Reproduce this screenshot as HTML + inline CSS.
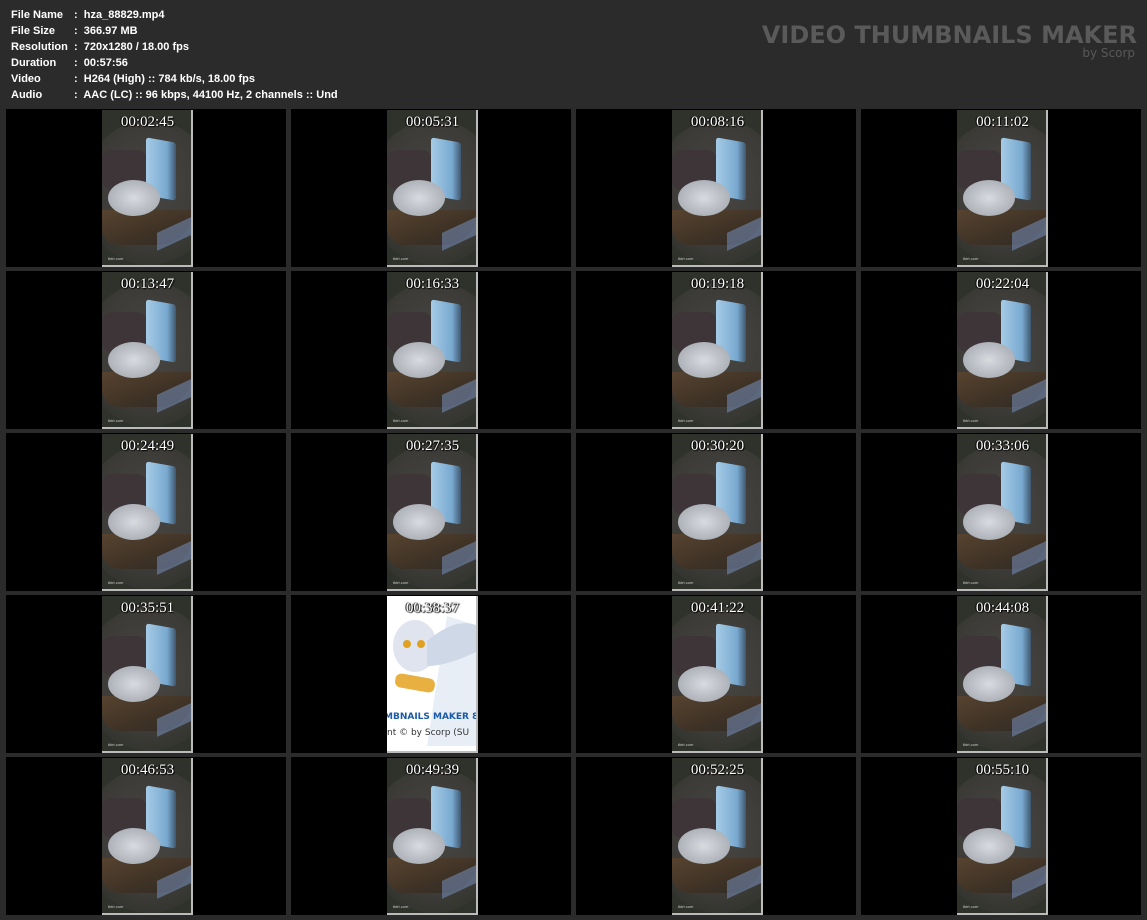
<!DOCTYPE html>
<html><head><meta charset="utf-8"><style>
*{margin:0;padding:0;box-sizing:border-box}
body{width:1147px;height:920px;background:#2b2b2b;position:relative;overflow:hidden;font-family:"Liberation Sans",Arial,sans-serif}
.info{position:absolute;left:11px;top:7px;color:#fff;font-size:11px;font-weight:bold;line-height:16px}
.info div{white-space:pre}
.info span{display:inline-block;width:63px}
.logo{position:absolute;right:10px;top:22px;color:#5a5a5a;font-family:"DejaVu Sans",sans-serif;font-weight:bold;font-size:24px;letter-spacing:0px;text-align:right;line-height:26px}
.logo small{display:block;font-size:12px;font-weight:normal;line-height:11px;margin-right:2px;color:#585858}
.cell{position:absolute;width:280px;height:158px;background:#000}
.th{position:absolute;left:96px;top:1px;width:91px;height:157px;background:#2f312b;overflow:hidden;border-right:2px solid #bbb;border-bottom:2px solid #bbb}
.th .v{position:absolute;left:-20px;top:10px;width:135px;height:145px;border-radius:50%;background:radial-gradient(ellipse at 50% 45%,#4a4743 0%,#3c3b37 55%,#30322c 80%)}
.th .wall{position:absolute;left:0;top:40px;width:45px;height:40px;background:#3d3538;border-radius:10px}
.th .win{position:absolute;left:44px;top:30px;width:30px;height:58px;background:linear-gradient(90deg,#a5cbe6,#79a9d0 70%,#3e5870);transform:skewY(10deg);border-radius:3px}
.th .bed{position:absolute;left:6px;top:70px;width:52px;height:36px;border-radius:50%;background:radial-gradient(#d8dbe0,#aeb2b9 70%,#7a7e86)}
.th .fl{position:absolute;left:0;top:100px;width:91px;height:35px;background:linear-gradient(160deg,#57432f,#3e3226 60%,#2e2a26);border-radius:0 0 40px 20px}
.th .lit{position:absolute;left:55px;top:115px;width:34px;height:18px;background:#7287ad;transform:skewY(-25deg);opacity:.6}
.th .wm{position:absolute;left:6px;bottom:4px;font-size:4px;color:#ccc}
.ts{position:absolute;left:96px;top:5px;width:91px;text-align:center;color:#fff;font-family:"Liberation Serif",serif;font-size:15px;text-shadow:1px 1px 1px #000,-1px 0 1px #000;z-index:2}
.owl{background:#fff}
</style></head><body>
<div class="info">
<div><span>File Name</span>:  hza_88829.mp4</div>
<div><span>File Size</span>:  366.97 MB</div>
<div><span>Resolution</span>:  720x1280 / 18.00 fps</div>
<div><span>Duration</span>:  00:57:56</div>
<div><span>Video</span>:  H264 (High) :: 784 kb/s, 18.00 fps</div>
<div><span>Audio</span>:  AAC (LC) :: 96 kbps, 44100 Hz, 2 channels :: Und</div>
</div>
<div class="logo">VIDEO THUMBNAILS MAKER<small>by Scorp</small></div>

<div id="grid"></div>
<script>
var t=["00:02:45","00:05:31","00:08:16","00:11:02","00:13:47","00:16:33","00:19:18","00:22:04","00:24:49","00:27:35","00:30:20","00:33:06","00:35:51","00:38:37","00:41:22","00:44:08","00:46:53","00:49:39","00:52:25","00:55:10"];
var xs=[6,291,576,861],ys=[109,271,433,595,757],h="";
for(var i=0;i<20;i++){var c=i%4,r=Math.floor(i/4);
var inner=(i==13)?'<div class="th owl"><svg width="91" height="157"><path d="M60 20 L91 30 L91 150 L40 150 Z" fill="#e8eef6"/><ellipse cx="28" cy="50" rx="22" ry="26" fill="#dfe4ee"/><path d="M40 45 Q70 20 91 30 L91 55 Q60 70 40 70Z" fill="#cfd8e6"/><circle cx="20" cy="48" r="4" fill="#e0a020"/><circle cx="34" cy="48" r="4" fill="#e0a020"/><rect x="8" y="80" width="40" height="14" rx="6" fill="#e8b040" transform="rotate(10 28 87)"/><text x="-3" y="123" font-family="DejaVu Sans" font-weight="bold" font-size="9" fill="#1a5aa8">MBNAILS MAKER 8</text><text x="0" y="139" font-family="DejaVu Sans" font-size="9" fill="#333">nt © by Scorp (SU</text></svg></div>':'<div class="th"><div class="v"></div><div class="wall"></div><div class="fl"></div><div class="lit"></div><div class="win"></div><div class="bed"></div><div class="wm">tktrt.com</div></div>';
h+='<div class="cell" style="left:'+xs[c]+'px;top:'+ys[r]+'px">'+inner+'<div class="ts">'+t[i]+'</div></div>';}
document.getElementById("grid").innerHTML=h;
</script>
</body></html>
